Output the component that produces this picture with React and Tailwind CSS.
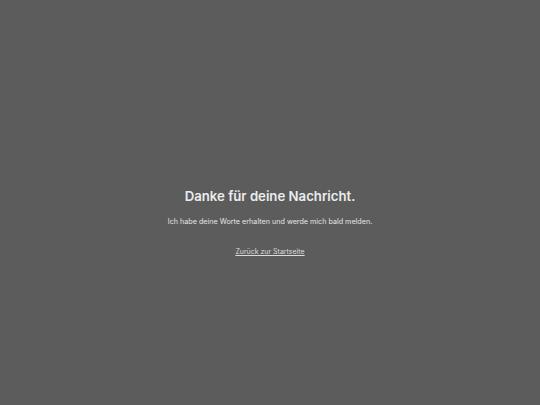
export default function App() {
  return (
    <div className="flex min-h-screen w-full items-center justify-center bg-[#5c5c5c] pt-[38px] text-[#ececec]" style={{ fontFamily: 'Inter, "Noto Sans", sans-serif' }}>
      <div className="flex flex-col items-center text-center">
        <h1 className="text-[13.2px] font-semibold leading-[18px]">Danke für deine Nachricht.</h1>
        <p className="mt-[12px] text-[7.2px] leading-[10px] text-[#e4e4e4]">Ich habe deine Worte erhalten und werde mich bald melden.</p>
        <a href="#" className="mt-[20px] text-[7px] leading-[10px] text-[#dcdcdc] underline">Zurück zur Startseite</a>
      </div>
    </div>
  );
}
